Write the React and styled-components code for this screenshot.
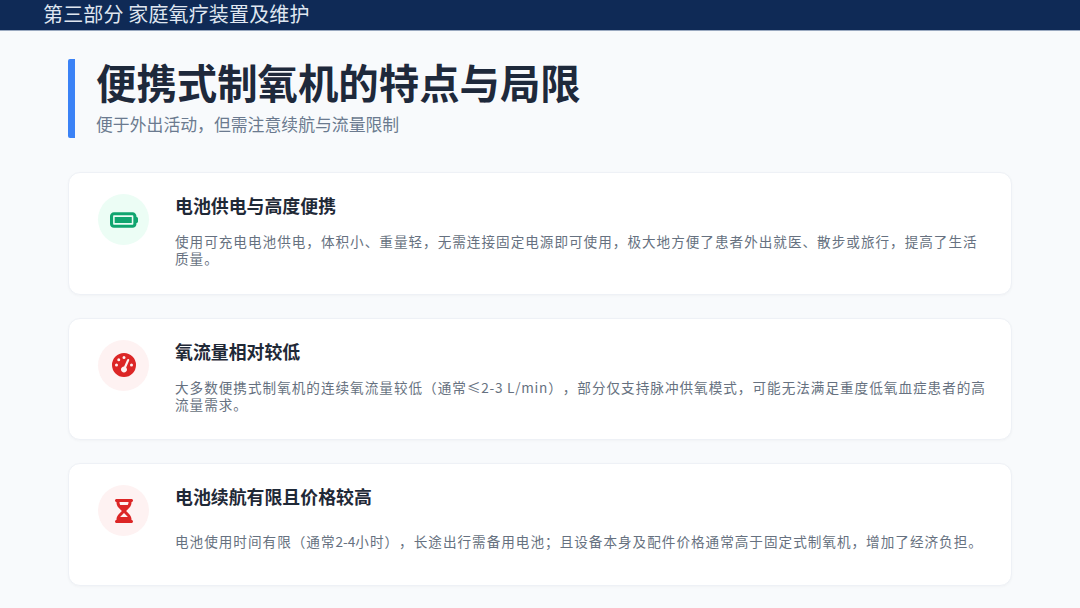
import React from "react";
import styled, { createGlobalStyle } from "styled-components";
import { FaBatteryFull, FaGaugeHigh, FaHourglassHalf } from "react-icons/fa6";

const GlobalStyle = createGlobalStyle`
	html, body {
		margin: 0;
		padding: 0;
		background: #f8fafc;
		font-family: "Noto Sans CJK SC", "Noto Sans", sans-serif;
		text-spacing-trim: space-all;
	}
`;

const Page = styled.div`
	width: 1080px;
	height: 608px;
	overflow: hidden;
	background: #f8fafc;
`;

const TopBar = styled.div`
	height: 30px;
	padding-left: 43px;
	background: #0f2a56;
	border-bottom: 1px solid #9aa9c0;
	color: #dfe6f0;
	font-size: 20px;
	letter-spacing: 0.15px;
	line-height: 28px;
`;

const Content = styled.div`
	padding: 28px 68px 0;
`;

const Header = styled.div`
	display: flex;
	flex-direction: column;
	height: 79px;
	padding-left: 21px;
	border-left: 7px solid #3b82f6;
	border-radius: 2px;
	margin-bottom: 34px;
`;

const Title = styled.h1`
	margin: -2px 0 0;
	color: #1e293b;
	font-size: 40.4px;
	font-weight: 700;
	line-height: 50px;
`;

const Subtitle = styled.div`
	margin-top: 4px;
	color: #6b7a8f;
	font-size: 16.85px;
	line-height: 26px;
`;

const CardList = styled.div`
	display: flex;
	flex-direction: column;
	gap: 23px;
`;

const Card = styled.div`
	box-sizing: border-box;
	display: flex;
	gap: 26px;
	height: 122.5px;
	padding: 21px 22px 0 29px;
	background: #fff;
	border: 1px solid #eef1f6;
	border-radius: 12px;
	box-shadow: 0 1px 3px rgba(15, 23, 42, 0.03);
`;

const IconCircle = styled.div`
	flex: none;
	display: flex;
	align-items: center;
	justify-content: center;
	width: 51px;
	height: 51px;
	border-radius: 50%;
	background: ${(p) => (p.$tone === "green" ? "#ecfdf5" : "#fef2f2")};
	color: ${(p) => (p.$tone === "green" ? "#10a56f" : "#dc2626")};
	font-size: 24px;
`;

const CardBody = styled.div`
	flex: 1;
	min-width: 0;
`;

const CardTitle = styled.h3`
	margin: -2px 0 15px;
	color: #1f2937;
	font-size: 17.9px;
	font-weight: 700;
	line-height: 26px;
`;

const CardText = styled.div`
	display: flex;
	align-items: center;
	min-height: 34px;
	color: #667180;
	font-size: 13.6px;
	letter-spacing: 1px;
	line-height: 17px;
`;

const Latin = styled.span`
	letter-spacing: ${(p) => p.$spacing}px;
`;

const items = [
	{
		tone: "green",
		icon: <FaBatteryFull size={28} />,
		title: "电池供电与高度便携",
		text: <>使用可充电电池供电，体积小、重量轻，无需连接固定电源即可使用，极大地方便了患者外出就医、散步或旅行，提高了生活质量。</>,
	},
	{
		tone: "red",
		icon: <FaGaugeHigh />,
		title: "氧流量相对较低",
		text: (
			<>
				大多数便携式制氧机的连续氧流量较低（通常<Latin $spacing={0.75}>≤2-3 L/min</Latin>），部分仅支持脉冲供氧模式，可能无法满足重度低氧血症患者的高
				<br />
				流量需求。
			</>
		),
	},
	{
		tone: "red",
		icon: <FaHourglassHalf />,
		title: "电池续航有限且价格较高",
		text: <>电池使用时间有限（通常<Latin $spacing={0}>2-4</Latin>小时），长途出行需备用电池；且设备本身及配件价格通常高于固定式制氧机，增加了经济负担。</>,
	},
];

const App = () => {
	return (
		<Page>
			<GlobalStyle />
			<TopBar>第三部分 家庭氧疗装置及维护</TopBar>
			<Content>
				<Header>
					<Title>便携式制氧机的特点与局限</Title>
					<Subtitle>便于外出活动，但需注意续航与流量限制</Subtitle>
				</Header>
				<CardList>
					{items.map((item) => (
						<Card key={item.title}>
							<IconCircle $tone={item.tone}>{item.icon}</IconCircle>
							<CardBody>
								<CardTitle>{item.title}</CardTitle>
								<CardText>
									<span>{item.text}</span>
								</CardText>
							</CardBody>
						</Card>
					))}
				</CardList>
			</Content>
		</Page>
	);
};

export default App;
